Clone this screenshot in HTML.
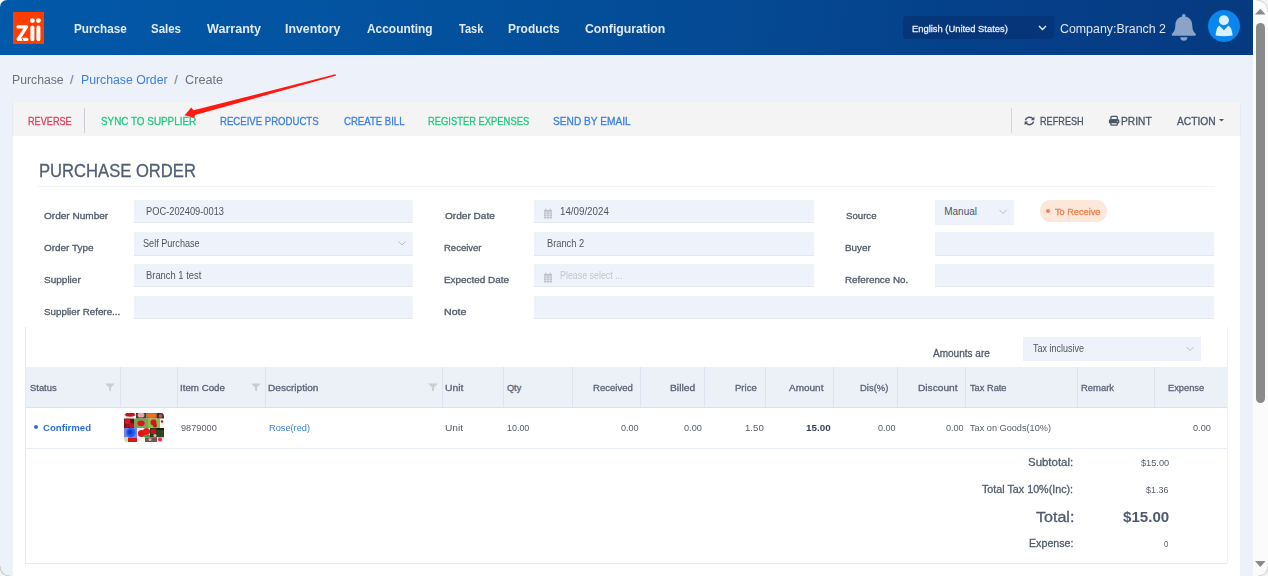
<!DOCTYPE html>
<html><head><meta charset="utf-8">
<style>
*{box-sizing:border-box;margin:0;padding:0}
html,body{width:1268px;height:576px;overflow:hidden;background:#fff}
body{font-family:"Liberation Sans",sans-serif;position:relative}
.tx{position:absolute;white-space:nowrap;font-family:"Liberation Sans",sans-serif}
.b{position:absolute}
.inp{position:absolute;height:23px;background:#eef2fa;border-bottom:1px solid #e3e9f3}
.vs{position:absolute;top:367px;width:1px;height:41px;background:#dce4ef}
</style></head><body>
<!-- header -->
<div class="b" style="left:0;top:0;width:1253px;height:55px;background:linear-gradient(96deg,#0259a9 0%,#03519d 35%,#054a94 58%,#05408a 78%,#063a80 100%);border-top-left-radius:7px"></div>
<!-- logo -->
<svg class="b" style="left:13px;top:12px" width="31" height="32" viewBox="0 0 31 32">
<rect width="31" height="32" fill="#ff3d00"/>
<g stroke="#fff" stroke-linecap="round" fill="none">
<path d="M5 14.9 H13.6 L5.2 27.3 H13.9" stroke-width="3.3" stroke-linejoin="round"/>
<path d="M19.4 15.6 V27.3 M25.4 15.6 V27.3" stroke-width="4"/>
</g>
<circle cx="19.4" cy="8.6" r="2.4" fill="#fff"/><circle cx="25.4" cy="8.6" r="2.4" fill="#fff"/>
<path d="M8.6 25.6 L10.2 29" stroke="#ff3d00" stroke-width="1"/>
</svg>
<!-- lang selector -->
<div class="b" style="left:903px;top:16px;width:151px;height:23px;background:#06357a;border-radius:4px"></div>
<svg class="b" style="left:1037px;top:24px" width="11" height="8" viewBox="0 0 11 8"><path d="M2 2 L5.5 5.5 L9 2" stroke="#e6ecf5" stroke-width="1.4" fill="none"/></svg>
<!-- bell -->
<svg class="b" style="left:1170px;top:12px" width="28" height="30" viewBox="0 0 28 30">
<g fill="#8ba3c6">
<rect x="11.9" y="2" width="3.8" height="4" rx="1.9"/>
<path d="M13.8 4.5 C9 4.5 5.6 7.5 5.4 12.5 C5.2 17 4.6 19.5 2.4 21.2 C1.4 22 1.5 23.7 2.8 23.7 H24.8 C26.1 23.7 26.2 22 25.2 21.2 C23 19.5 22.4 17 22.2 12.5 C22 7.5 18.6 4.5 13.8 4.5 Z"/>
<path d="M10.1 25.2 H17.5 C17.2 27.6 15.8 28.7 13.8 28.7 C11.8 28.7 10.4 27.6 10.1 25.2 Z"/>
</g></svg>
<!-- avatar -->
<svg class="b" style="left:1208px;top:10px" width="32" height="32" viewBox="0 0 32 32">
<circle cx="16" cy="16" r="16" fill="#0a87ee"/>
<circle cx="15.9" cy="10.2" r="5" fill="#d6f0fd"/>
<path d="M11.5 15.8 L15.9 20.2 L20.3 15.8 C23 16.8 24.3 21 24.6 25.6 C19 26.6 13 26.6 7.6 25.6 C7.9 21 9 16.8 11.5 15.8 Z" fill="#d6f0fd"/>
</svg>
<!-- main bg -->
<div class="b" style="left:0;top:55px;width:1253px;height:521px;background:#edf1f9"></div>
<!-- scrollbar -->
<div class="b" style="left:1253px;top:0;width:15px;height:576px;background:#fbfbfb"></div>
<svg class="b" style="left:1253px;top:6px" width="15" height="10" viewBox="0 0 15 10"><path d="M2 8.6 L7.3 2.8 L12.6 8.6 Z" fill="#8a8a8a"/></svg>
<div class="b" style="left:1256px;top:23px;width:9px;height:380px;background:#8a8a8a;border-radius:5px"></div>
<svg class="b" style="left:1253px;top:559px" width="15" height="10" viewBox="0 0 15 10"><path d="M2 2 L7.3 8 L12.6 2 Z" fill="#8a8a8a"/></svg>
<!-- toolbar -->
<div class="b" style="left:13px;top:102px;width:1227px;height:34px;background:#f4f4f4;box-shadow:0 1px 2px rgba(0,0,0,0.10)"></div>
<div class="b" style="left:84px;top:108px;width:1px;height:25px;background:#c9cdd9"></div>
<div class="b" style="left:1011px;top:108px;width:1px;height:25px;background:#d2d5de"></div>
<!-- refresh icon -->
<svg class="b" style="left:1023px;top:114px" width="13" height="13" viewBox="0 0 13 13">
<g fill="none" stroke="#4a5568" stroke-width="1.5"><path d="M2.4 6.2 A4.2 3.9 0 0 1 10.0 4.9"/><path d="M10.6 7.6 A4.2 3.9 0 0 1 3.0 8.9"/></g>
<path d="M11.4 2.6 V6.2 H7.8 Z" fill="#4a5568"/><path d="M1.6 11.2 V7.6 H5.2 Z" fill="#4a5568"/>
</svg>
<!-- print icon -->
<svg class="b" style="left:1108px;top:115px" width="12" height="11" viewBox="0 0 12 11">
<rect x="2.9" y="1.35" width="6.4" height="3.2" rx="0.9" fill="none" stroke="#4a5568" stroke-width="1.3"/>
<rect x="0.9" y="4.2" width="10.4" height="4.3" rx="1.2" fill="#4a5568"/>
<rect x="2.9" y="7.6" width="6.4" height="2.6" rx="0.6" fill="#f4f4f4" stroke="#4a5568" stroke-width="1.3"/>
<circle cx="9.4" cy="6.3" r="0.6" fill="#9fd4f0"/>
</svg>
<svg class="b" style="left:1218px;top:118px" width="7" height="5" viewBox="0 0 7 5"><path d="M1 1 H6 L3.5 3.6 Z" fill="#4a5568"/></svg>
<!-- card -->
<div class="b" style="left:13px;top:136px;width:1227px;height:440px;background:#fff"></div>
<div class="b" style="left:38px;top:186px;width:1177px;height:1px;background:#f0f2f6"></div>
<!-- inputs col1 -->
<div class="inp" style="left:134px;top:200px;width:279px"></div>
<div class="inp" style="left:134px;top:232px;width:279px;height:24px"></div>
<svg class="b" style="left:397px;top:240px" width="10" height="7" viewBox="0 0 10 7"><path d="M1.5 1.5 L5 5 L8.5 1.5" stroke="#b9bfcc" stroke-width="1" fill="none"/></svg>
<div class="inp" style="left:134px;top:264px;width:279px"></div>
<div class="inp" style="left:134px;top:296px;width:279px"></div>
<!-- col2 -->
<div class="inp" style="left:534px;top:200px;width:280px"></div>
<div class="inp" style="left:534px;top:232px;width:280px;height:24px"></div>
<div class="inp" style="left:534px;top:264px;width:280px"></div>
<div class="inp" style="left:534px;top:296px;width:680px"></div>
<!-- calendar icons -->
<svg class="b" style="left:543px;top:208px" width="10" height="11" viewBox="0 0 10 11"><rect x="1" y="2" width="8" height="8.5" fill="#bcc0ce"/><rect x="2.2" y="0.6" width="1.2" height="2.4" fill="#bcc0ce"/><rect x="6.6" y="0.6" width="1.2" height="2.4" fill="#bcc0ce"/><g stroke="#eef2fa" stroke-width="0.5"><path d="M1 4 H9 M1 6.2 H9 M1 8.4 H9 M3.6 4 V10.5 M6.4 4 V10.5"/></g></svg>
<svg class="b" style="left:543px;top:272px" width="10" height="11" viewBox="0 0 10 11"><rect x="1" y="2" width="8" height="8.5" fill="#bcc0ce"/><rect x="2.2" y="0.6" width="1.2" height="2.4" fill="#bcc0ce"/><rect x="6.6" y="0.6" width="1.2" height="2.4" fill="#bcc0ce"/><g stroke="#eef2fa" stroke-width="0.5"><path d="M1 4 H9 M1 6.2 H9 M1 8.4 H9 M3.6 4 V10.5 M6.4 4 V10.5"/></g></svg>
<!-- col3 -->
<div class="b" style="left:935px;top:200px;width:79px;height:25px;background:#eef2fa"></div>
<svg class="b" style="left:998px;top:208px" width="10" height="8" viewBox="0 0 10 8"><path d="M1.5 2 L5 5.5 L8.5 2" stroke="#b9bfcc" stroke-width="1" fill="none"/></svg>
<div class="b" style="left:1039.5px;top:200px;width:67px;height:22px;background:#fde6da;border-radius:11px"></div>
<div class="b" style="left:1046px;top:209px;width:4px;height:4px;background:#f0824e;border-radius:2px"></div>
<div class="inp" style="left:935px;top:232px;width:279px;height:24px"></div>
<div class="inp" style="left:935px;top:264px;width:279px"></div>
<!-- table container -->
<div class="b" style="left:25px;top:327px;width:1203px;height:237px;border:1px solid #e6ebf3;border-top:0;border-right-color:#eef1f6"></div>
<div class="b" style="left:1023px;top:337px;width:178px;height:24px;background:#eef2fa"></div>
<svg class="b" style="left:1185px;top:345px" width="10" height="8" viewBox="0 0 10 8"><path d="M1.5 2 L5 5.5 L8.5 2" stroke="#b9bfcc" stroke-width="1" fill="none"/></svg>
<div class="b" style="left:26px;top:367px;width:1201px;height:41px;background:#ecf1f8;border-bottom:1px solid #d9e2ee"></div>
<div class="vs" style="left:120px"></div><div class="vs" style="left:177px"></div><div class="vs" style="left:265px"></div>
<div class="vs" style="left:442px"></div><div class="vs" style="left:503px"></div><div class="vs" style="left:572px"></div>
<div class="vs" style="left:640px"></div><div class="vs" style="left:704px"></div><div class="vs" style="left:765px"></div>
<div class="vs" style="left:833px"></div><div class="vs" style="left:897px"></div><div class="vs" style="left:965px"></div>
<div class="vs" style="left:1077px"></div><div class="vs" style="left:1154px"></div>
<!-- filter icons -->
<svg class="b" style="left:105px;top:383px" width="10" height="9" viewBox="0 0 10 9"><path d="M0.2 0.5 H9.8 L6 4.4 V8.6 L4 7.2 V4.4 Z" fill="#c9cdd4"/></svg>
<svg class="b" style="left:250.5px;top:383px" width="10" height="9" viewBox="0 0 10 9"><path d="M0.2 0.5 H9.8 L6 4.4 V8.6 L4 7.2 V4.4 Z" fill="#c9cdd4"/></svg>
<svg class="b" style="left:427.5px;top:383px" width="10" height="9" viewBox="0 0 10 9"><path d="M0.2 0.5 H9.8 L6 4.4 V8.6 L4 7.2 V4.4 Z" fill="#c9cdd4"/></svg>
<!-- row -->
<div class="b" style="left:26px;top:448px;width:1201px;height:1px;background:#e9eef5"></div>
<div class="b" style="left:34px;top:425px;width:4px;height:4px;background:#2e6fd8;border-radius:2px"></div>
<!-- product thumbnail -->
<svg class="b" style="left:123.5px;top:412.7px" width="40" height="29.3" viewBox="0 0 40 29.3">
<defs><clipPath id="cp"><rect width="40" height="29.3" rx="3.5"/></clipPath><filter id="bl"><feGaussianBlur stdDeviation="0.45"/></filter></defs>
<g clip-path="url(#cp)"><g filter="url(#bl)">
<rect x="-1" y="-1" width="42" height="32" fill="#ffffff"/>
<rect x="0" y="0" width="12" height="5.6" fill="#f4efe9"/><ellipse cx="6" cy="1.6" rx="5" ry="2.2" fill="#c8141c"/>
<rect x="12" y="0" width="10.5" height="5.6" fill="#2f4a2a"/><ellipse cx="17" cy="2" rx="3.4" ry="2.6" fill="#f0a2a8"/>
<rect x="22.5" y="0" width="10.5" height="5.6" fill="#c2531e"/><ellipse cx="27.5" cy="2.5" rx="4.5" ry="2.6" fill="#e4741c"/>
<rect x="33" y="0" width="7" height="5.6" fill="#2a3a26"/><circle cx="36.5" cy="3" r="1.8" fill="#e2457a"/>
<rect x="0" y="5.6" width="10" height="9.4" fill="#5a1418"/><circle cx="3.5" cy="8.5" r="3" fill="#d8182a"/><circle cx="7.5" cy="12.5" r="2.6" fill="#c8101e"/><circle cx="3" cy="13" r="2" fill="#b01020"/>
<rect x="10" y="5.6" width="14" height="9.4" fill="#7ea05a"/><ellipse cx="17" cy="10.2" rx="3.6" ry="2.8" fill="#d8141c"/>
<rect x="24" y="5.6" width="12" height="9.4" fill="#8cc04a"/><circle cx="29.5" cy="9.5" r="3" fill="#d8161e"/><circle cx="31" cy="12.6" r="2" fill="#c0141c"/>
<rect x="36" y="5.6" width="4" height="9.4" fill="#f5f0f0"/><circle cx="38" cy="8.5" r="1.2" fill="#c0141c"/>
<rect x="0" y="15" width="13" height="9.5" fill="#7a7ee8"/><circle cx="6.8" cy="19.6" r="4.6" fill="#1a5ef0"/><circle cx="6.2" cy="19.2" r="2.2" fill="#0a3cc8"/>
<rect x="13" y="15" width="13" height="9.5" fill="#eaf0e8"/><circle cx="17.5" cy="20.5" r="3.6" fill="#d81818"/><circle cx="22.5" cy="18.5" r="3.6" fill="#e01c1c"/><rect x="20" y="22" width="6" height="2.5" fill="#4a9a40"/>
<rect x="26" y="15" width="7" height="9.5" fill="#24401e"/><circle cx="29.5" cy="18.5" r="2.8" fill="#d0101e"/><circle cx="31" cy="22.5" r="1.5" fill="#f0b0c0"/>
<rect x="33" y="15" width="7" height="9.5" fill="#2a4424"/><rect x="33" y="15" width="7" height="2" fill="#1a1a14"/>
<rect x="0" y="24.5" width="4" height="5" fill="#c8dcb8"/><rect x="4" y="24.5" width="9" height="5" fill="#d81418"/>
<rect x="13" y="24.5" width="8" height="5" fill="#f4f4f0"/><rect x="21" y="24.5" width="12" height="5" fill="#6a5a4a"/><circle cx="26" cy="26.5" r="1.6" fill="#e8a0b0"/>
<rect x="33" y="24.5" width="7" height="5" fill="#f6dde4"/><circle cx="36" cy="26.5" r="2" fill="#e03050"/>
</g></g></svg>
<!-- arrow annotation -->
<svg class="b" style="left:0;top:0;z-index:10" width="1268" height="576" viewBox="0 0 1268 576">
<path d="M184.6 115.3 L191.3 107.4 L193.6 110.3 L335.3 74.35 Q336.3 74.9 335.7 75.8 L195.1 115.0 L194.1 117.8 Z" fill="#ff1a0f"/>
</svg>
<!-- window corners -->
<svg class="b" style="left:0;top:566px;z-index:11" width="10" height="10" viewBox="0 0 10 10"><path d="M0 0 Q0.5 9.5 10 10 L0 10 Z" fill="#f4f4f4"/><path d="M0 0 Q0.5 9.5 10 10" stroke="#cfcfcf" stroke-width="1.2" fill="none"/></svg>
<svg class="b" style="left:1258px;top:566px;z-index:11" width="10" height="10" viewBox="0 0 10 10"><path d="M10 0 Q9.5 9.5 0 10 L10 10 Z" fill="#f4f4f4"/><path d="M10 0 Q9.5 9.5 0 10" stroke="#d8d8d8" stroke-width="1.2" fill="none"/></svg>
<svg class="b" style="left:1256px;top:0;z-index:11" width="12" height="12" viewBox="0 0 12 12"><path d="M12 12 Q11.5 0.5 0 0 L12 0 Z" fill="#f4f4f4"/><path d="M12 12 Q11.5 0.5 0 0" stroke="#dedede" stroke-width="1.2" fill="none"/></svg>
<span class="tx" style="left:74.08px;top:23px;transform-origin:0 0;color:#e3eaf5;font-size:12.8px;line-height:12.8px;font-weight:700;transform:scaleX(0.9161);">Purchase</span>
<span class="tx" style="left:151.40px;top:23px;transform-origin:0 0;color:#e3eaf5;font-size:12.8px;line-height:12.8px;font-weight:700;transform:scaleX(0.8969);">Sales</span>
<span class="tx" style="left:207.00px;top:23px;transform-origin:0 0;color:#e3eaf5;font-size:12.8px;line-height:12.8px;font-weight:700;transform:scaleX(0.9818);">Warranty</span>
<span class="tx" style="left:284.84px;top:23px;transform-origin:0 0;color:#e3eaf5;font-size:12.8px;line-height:12.8px;font-weight:700;transform:scaleX(0.9632);">Inventory</span>
<span class="tx" style="left:367.10px;top:23px;transform-origin:0 0;color:#e3eaf5;font-size:12.8px;line-height:12.8px;font-weight:700;transform:scaleX(0.9314);">Accounting</span>
<span class="tx" style="left:458.50px;top:23px;transform-origin:0 0;color:#e3eaf5;font-size:12.8px;line-height:12.8px;font-weight:700;transform:scaleX(0.8607);">Task</span>
<span class="tx" style="left:507.77px;top:23px;transform-origin:0 0;color:#e3eaf5;font-size:12.8px;line-height:12.8px;font-weight:700;transform:scaleX(0.9333);">Products</span>
<span class="tx" style="left:585.40px;top:23px;transform-origin:0 0;color:#e3eaf5;font-size:12.8px;line-height:12.8px;font-weight:700;transform:scaleX(0.9578);">Configuration</span>
<span class="tx" style="left:911.70px;top:24px;transform-origin:0 0;color:#e6ecf5;font-size:9.4px;line-height:9.4px;font-weight:400;-webkit-text-stroke:0.3px #e6ecf5;transform:scaleX(0.9989);">English (United States)</span>
<span class="tx" style="left:1060.03px;top:23px;transform-origin:0 0;color:#dfe6f1;font-size:12.8px;line-height:12.8px;font-weight:400;transform:scaleX(0.9667);">Company:Branch 2</span>
<span class="tx" style="left:12.41px;top:74px;transform-origin:0 0;color:#6c7280;font-size:12.3px;line-height:12.3px;font-weight:400;transform:scaleX(0.9940);">Purchase</span>
<span class="tx" style="left:70.00px;top:74px;transform-origin:0 0;color:#6c7280;font-size:12.3px;line-height:12.3px;font-weight:400;">/</span>
<span class="tx" style="left:80.80px;top:74px;transform-origin:0 0;color:#3f80e0;font-size:12.3px;line-height:12.3px;font-weight:400;transform:scaleX(0.9977);">Purchase Order</span>
<span class="tx" style="left:174.30px;top:74px;transform-origin:0 0;color:#6c7280;font-size:12.3px;line-height:12.3px;font-weight:400;">/</span>
<span class="tx" style="left:184.67px;top:74px;transform-origin:0 0;color:#6c7280;font-size:12.3px;line-height:12.3px;font-weight:400;transform:scaleX(1.0314);">Create</span>
<span class="tx" style="left:28.47px;top:116px;transform-origin:0 0;color:#e23d5e;font-size:11px;line-height:11px;font-weight:400;-webkit-text-stroke:0.3px #e23d5e;transform:scaleX(0.8314);">REVERSE</span>
<span class="tx" style="left:100.90px;top:116px;transform-origin:0 0;color:#20c882;font-size:11px;line-height:11px;font-weight:400;-webkit-text-stroke:0.3px #20c882;transform:scaleX(0.8981);">SYNC TO SUPPLIER</span>
<span class="tx" style="left:219.83px;top:116px;transform-origin:0 0;color:#3b7fe0;font-size:11px;line-height:11px;font-weight:400;-webkit-text-stroke:0.3px #3b7fe0;transform:scaleX(0.8723);">RECEIVE PRODUCTS</span>
<span class="tx" style="left:343.60px;top:116px;transform-origin:0 0;color:#3b7fe0;font-size:11px;line-height:11px;font-weight:400;-webkit-text-stroke:0.3px #3b7fe0;transform:scaleX(0.8710);">CREATE BILL</span>
<span class="tx" style="left:428.45px;top:116px;transform-origin:0 0;color:#20c882;font-size:11px;line-height:11px;font-weight:400;-webkit-text-stroke:0.3px #20c882;transform:scaleX(0.8530);">REGISTER EXPENSES</span>
<span class="tx" style="left:553.48px;top:116px;transform-origin:0 0;color:#3b7fe0;font-size:11px;line-height:11px;font-weight:400;-webkit-text-stroke:0.3px #3b7fe0;transform:scaleX(0.9241);">SEND BY EMAIL</span>
<span class="tx" style="left:1040.07px;top:116px;transform-origin:0 0;color:#4a5568;font-size:11px;line-height:11px;font-weight:400;-webkit-text-stroke:0.3px #4a5568;transform:scaleX(0.8314);">REFRESH</span>
<span class="tx" style="left:1120.77px;top:116px;transform-origin:0 0;color:#4a5568;font-size:11px;line-height:11px;font-weight:400;-webkit-text-stroke:0.3px #4a5568;transform:scaleX(0.9281);">PRINT</span>
<span class="tx" style="left:1177.20px;top:116px;transform-origin:0 0;color:#4a5568;font-size:11px;line-height:11px;font-weight:400;-webkit-text-stroke:0.3px #4a5568;transform:scaleX(0.9317);">ACTION</span>
<span class="tx" style="left:38.90px;top:162px;transform-origin:0 0;color:#505e73;font-size:18.5px;line-height:18.5px;font-weight:400;-webkit-text-stroke:0.3px #505e73;transform:scaleX(0.8977);">PURCHASE ORDER</span>
<span class="tx" style="left:44.30px;top:212px;transform-origin:0 0;color:#525c6c;font-size:9px;line-height:9px;font-weight:400;-webkit-text-stroke:0.3px #525c6c;transform:scaleX(1.1155);">Order Number</span>
<span class="tx" style="left:44.30px;top:244px;transform-origin:0 0;color:#525c6c;font-size:9px;line-height:9px;font-weight:400;-webkit-text-stroke:0.3px #525c6c;transform:scaleX(1.1044);">Order Type</span>
<span class="tx" style="left:44.30px;top:276px;transform-origin:0 0;color:#525c6c;font-size:9px;line-height:9px;font-weight:400;-webkit-text-stroke:0.3px #525c6c;transform:scaleX(1.1121);">Supplier</span>
<span class="tx" style="left:44.30px;top:308px;transform-origin:0 0;color:#525c6c;font-size:9px;line-height:9px;font-weight:400;-webkit-text-stroke:0.3px #525c6c;transform:scaleX(1.0886);">Supplier Refere...</span>
<span class="tx" style="left:445.10px;top:212px;transform-origin:0 0;color:#525c6c;font-size:9px;line-height:9px;font-weight:400;-webkit-text-stroke:0.3px #525c6c;transform:scaleX(1.1205);">Order Date</span>
<span class="tx" style="left:444.04px;top:244px;transform-origin:0 0;color:#525c6c;font-size:9px;line-height:9px;font-weight:400;-webkit-text-stroke:0.3px #525c6c;transform:scaleX(1.0571);">Receiver</span>
<span class="tx" style="left:444.00px;top:276px;transform-origin:0 0;color:#525c6c;font-size:9px;line-height:9px;font-weight:400;-webkit-text-stroke:0.3px #525c6c;transform:scaleX(1.1017);">Expected Date</span>
<span class="tx" style="left:443.92px;top:308px;transform-origin:0 0;color:#525c6c;font-size:9px;line-height:9px;font-weight:400;-webkit-text-stroke:0.3px #525c6c;transform:scaleX(1.1778);">Note</span>
<span class="tx" style="left:845.60px;top:212px;transform-origin:0 0;color:#525c6c;font-size:9px;line-height:9px;font-weight:400;-webkit-text-stroke:0.3px #525c6c;transform:scaleX(1.0714);">Source</span>
<span class="tx" style="left:844.50px;top:244px;transform-origin:0 0;color:#525c6c;font-size:9px;line-height:9px;font-weight:400;-webkit-text-stroke:0.3px #525c6c;transform:scaleX(1.0957);">Buyer</span>
<span class="tx" style="left:844.51px;top:276px;transform-origin:0 0;color:#525c6c;font-size:9px;line-height:9px;font-weight:400;-webkit-text-stroke:0.3px #525c6c;transform:scaleX(1.0877);">Reference No.</span>
<span class="tx" style="left:146.07px;top:207px;transform-origin:0 0;color:#4f5564;font-size:10px;line-height:10px;font-weight:400;transform:scaleX(0.9289);">POC-202409-0013</span>
<span class="tx" style="left:142.89px;top:239px;transform-origin:0 0;color:#4f5564;font-size:10px;line-height:10px;font-weight:400;transform:scaleX(0.9098);">Self Purchase</span>
<span class="tx" style="left:146.06px;top:271px;transform-origin:0 0;color:#4f5564;font-size:10px;line-height:10px;font-weight:400;transform:scaleX(0.9379);">Branch 1 test</span>
<span class="tx" style="left:560.02px;top:207px;transform-origin:0 0;color:#4f5564;font-size:10px;line-height:10px;font-weight:400;transform:scaleX(0.9755);">14/09/2024</span>
<span class="tx" style="left:546.87px;top:239px;transform-origin:0 0;color:#4f5564;font-size:10px;line-height:10px;font-weight:400;transform:scaleX(0.9282);">Branch 2</span>
<span class="tx" style="left:560.11px;top:271px;transform-origin:0 0;color:#c3c7d1;font-size:10px;line-height:10px;font-weight:400;transform:scaleX(0.8870);">Please select ...</span>
<span class="tx" style="left:944.20px;top:207px;transform-origin:0 0;color:#4f5564;font-size:10px;line-height:10px;font-weight:400;">Manual</span>
<span class="tx" style="left:1055.20px;top:207px;transform-origin:0 0;color:#f0824e;font-size:9.4px;line-height:9.4px;font-weight:400;-webkit-text-stroke:0.3px #f0824e;transform:scaleX(0.9783);">To Receive</span>
<span class="tx" style="left:933.40px;top:349px;transform-origin:0 0;color:#525c6c;font-size:10px;line-height:10px;font-weight:400;-webkit-text-stroke:0.3px #525c6c;transform:scaleX(1.0018);">Amounts are</span>
<span class="tx" style="left:1033.10px;top:344px;transform-origin:0 0;color:#4f5564;font-size:10px;line-height:10px;font-weight:400;transform:scaleX(0.8982);">Tax inclusive</span>
<span class="tx" style="left:29.90px;top:384px;transform-origin:0 0;color:#5a6476;font-size:9.3px;line-height:9.3px;font-weight:400;-webkit-text-stroke:0.3px #5a6476;transform:scaleX(1.0115);">Status</span>
<span class="tx" style="left:180.25px;top:384px;transform-origin:0 0;color:#5a6476;font-size:9.3px;line-height:9.3px;font-weight:400;-webkit-text-stroke:0.3px #5a6476;transform:scaleX(1.0476);">Item Code</span>
<span class="tx" style="left:268.42px;top:384px;transform-origin:0 0;color:#5a6476;font-size:9.3px;line-height:9.3px;font-weight:400;-webkit-text-stroke:0.3px #5a6476;transform:scaleX(1.0844);">Description</span>
<span class="tx" style="left:445.39px;top:384px;transform-origin:0 0;color:#5a6476;font-size:9.3px;line-height:9.3px;font-weight:400;-webkit-text-stroke:0.3px #5a6476;transform:scaleX(1.1125);">Unit</span>
<span class="tx" style="left:506.90px;top:384px;transform-origin:0 0;color:#5a6476;font-size:9.3px;line-height:9.3px;font-weight:400;-webkit-text-stroke:0.3px #5a6476;">Qty</span>
<span class="tx" style="left:592.67px;top:384px;transform-origin:0 0;color:#5a6476;font-size:9.3px;line-height:9.3px;font-weight:400;-webkit-text-stroke:0.3px #5a6476;transform:scaleX(1.0270);">Received</span>
<span class="tx" style="left:670.30px;top:384px;transform-origin:0 0;color:#5a6476;font-size:9.3px;line-height:9.3px;font-weight:400;-webkit-text-stroke:0.3px #5a6476;transform:scaleX(1.1048);">Billed</span>
<span class="tx" style="left:734.88px;top:384px;transform-origin:0 0;color:#5a6476;font-size:9.3px;line-height:9.3px;font-weight:400;-webkit-text-stroke:0.3px #5a6476;transform:scaleX(1.0250);">Price</span>
<span class="tx" style="left:789.30px;top:384px;transform-origin:0 0;color:#5a6476;font-size:9.3px;line-height:9.3px;font-weight:400;-webkit-text-stroke:0.3px #5a6476;transform:scaleX(1.0750);">Amount</span>
<span class="tx" style="left:859.99px;top:384px;transform-origin:0 0;color:#5a6476;font-size:9.3px;line-height:9.3px;font-weight:400;-webkit-text-stroke:0.3px #5a6476;transform:scaleX(1.0148);">Dis(%)</span>
<span class="tx" style="left:917.81px;top:384px;transform-origin:0 0;color:#5a6476;font-size:9.3px;line-height:9.3px;font-weight:400;-webkit-text-stroke:0.3px #5a6476;transform:scaleX(1.0943);">Discount</span>
<span class="tx" style="left:970.20px;top:384px;transform-origin:0 0;color:#5a6476;font-size:9.3px;line-height:9.3px;font-weight:400;-webkit-text-stroke:0.3px #5a6476;transform:scaleX(0.9944);">Tax Rate</span>
<span class="tx" style="left:1080.68px;top:384px;transform-origin:0 0;color:#5a6476;font-size:9.3px;line-height:9.3px;font-weight:400;-webkit-text-stroke:0.3px #5a6476;transform:scaleX(1.0156);">Remark</span>
<span class="tx" style="left:1168.40px;top:384px;transform-origin:0 0;color:#5a6476;font-size:9.3px;line-height:9.3px;font-weight:400;-webkit-text-stroke:0.3px #5a6476;transform:scaleX(0.9971);">Expense</span>
<span class="tx" style="left:43.10px;top:423px;transform-origin:0 0;color:#2e6fd8;font-size:9.6px;line-height:9.6px;font-weight:700;transform:scaleX(1.0021);">Confirmed</span>
<span class="tx" style="left:181.30px;top:423px;transform-origin:0 0;color:#565c6a;font-size:9.6px;line-height:9.6px;font-weight:400;transform:scaleX(0.9568);">9879000</span>
<span class="tx" style="left:268.54px;top:423px;transform-origin:0 0;color:#3b7fd9;font-size:9.6px;line-height:9.6px;font-weight:400;transform:scaleX(0.9610);">Rose(red)</span>
<span class="tx" style="left:445.44px;top:423px;transform-origin:0 0;color:#565c6a;font-size:9.6px;line-height:9.6px;font-weight:400;transform:scaleX(1.0625);">Unit</span>
<span class="tx" style="left:507.07px;top:423px;transform-origin:0 0;color:#565c6a;font-size:9.6px;line-height:9.6px;font-weight:400;transform:scaleX(0.9304);">10.00</span>
<span class="tx" style="left:621.30px;top:423px;transform-origin:0 0;color:#565c6a;font-size:9.6px;line-height:9.6px;font-weight:400;transform:scaleX(0.9444);">0.00</span>
<span class="tx" style="left:684.10px;top:423px;transform-origin:0 0;color:#565c6a;font-size:9.6px;line-height:9.6px;font-weight:400;transform:scaleX(0.9556);">0.00</span>
<span class="tx" style="left:744.99px;top:423px;transform-origin:0 0;color:#565c6a;font-size:9.6px;line-height:9.6px;font-weight:400;transform:scaleX(1.0059);">1.50</span>
<span class="tx" style="left:805.67px;top:423px;transform-origin:0 0;color:#3c4454;font-size:9.6px;line-height:9.6px;font-weight:700;transform:scaleX(1.0261);">15.00</span>
<span class="tx" style="left:877.70px;top:423px;transform-origin:0 0;color:#565c6a;font-size:9.6px;line-height:9.6px;font-weight:400;transform:scaleX(0.9444);">0.00</span>
<span class="tx" style="left:946.30px;top:423px;transform-origin:0 0;color:#565c6a;font-size:9.6px;line-height:9.6px;font-weight:400;transform:scaleX(0.9444);">0.00</span>
<span class="tx" style="left:970.20px;top:423px;transform-origin:0 0;color:#565c6a;font-size:9.6px;line-height:9.6px;font-weight:400;transform:scaleX(0.9548);">Tax on Goods(10%)</span>
<span class="tx" style="left:1193.30px;top:423px;transform-origin:0 0;color:#565c6a;font-size:9.6px;line-height:9.6px;font-weight:400;transform:scaleX(0.9556);">0.00</span>
<span class="tx" style="left:1028.10px;top:457px;transform-origin:0 0;color:#525c6c;font-size:10.5px;line-height:10.5px;font-weight:400;-webkit-text-stroke:0.3px #525c6c;transform:scaleX(1.0902);">Subtotal:</span>
<span class="tx" style="left:1140.80px;top:458px;transform-origin:0 0;color:#565c6a;font-size:9.4px;line-height:9.4px;font-weight:400;transform:scaleX(0.9821);">$15.00</span>
<span class="tx" style="left:981.80px;top:484px;transform-origin:0 0;color:#525c6c;font-size:10.5px;line-height:10.5px;font-weight:400;-webkit-text-stroke:0.3px #525c6c;transform:scaleX(1.0225);">Total Tax 10%(Inc):</span>
<span class="tx" style="left:1146.30px;top:485px;transform-origin:0 0;color:#565c6a;font-size:9.4px;line-height:9.4px;font-weight:400;transform:scaleX(0.9565);">$1.36</span>
<span class="tx" style="left:1035.80px;top:509px;transform-origin:0 0;color:#4f5b6e;font-size:15.2px;line-height:15.2px;font-weight:400;-webkit-text-stroke:0.3px #4f5b6e;transform:scaleX(1.0571);">Total:</span>
<span class="tx" style="left:1122.50px;top:509px;transform-origin:0 0;color:#4f5b6e;font-size:15.2px;line-height:15.2px;font-weight:700;transform:scaleX(0.9957);">$15.00</span>
<span class="tx" style="left:1029.08px;top:538px;transform-origin:0 0;color:#525c6c;font-size:10.5px;line-height:10.5px;font-weight:400;-webkit-text-stroke:0.3px #525c6c;transform:scaleX(1.0167);">Expense:</span>
<span class="tx" style="left:1164.10px;top:539px;transform-origin:0 0;color:#565c6a;font-size:9.4px;line-height:9.4px;font-weight:400;transform:scaleX(0.8400);">0</span>
</body></html>
